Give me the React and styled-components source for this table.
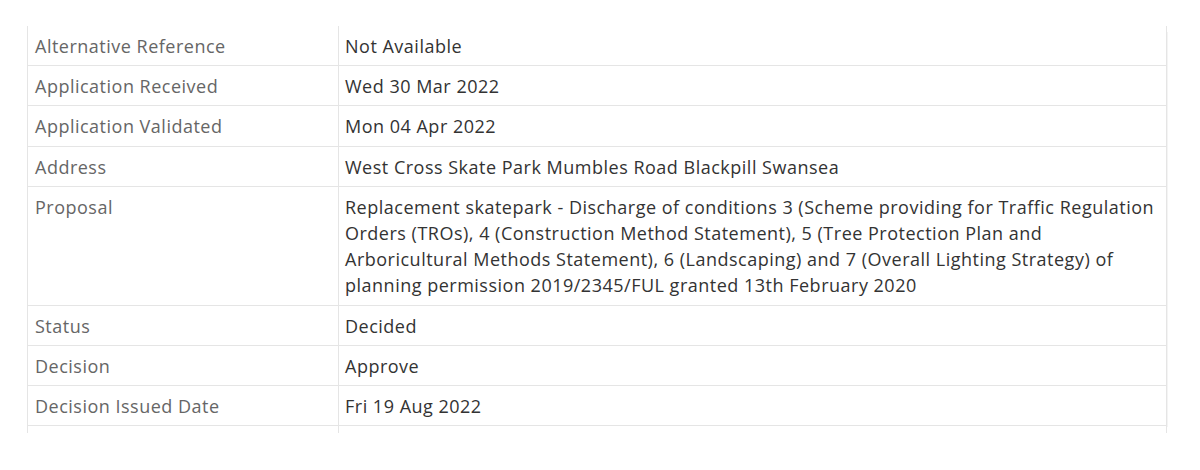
import React from 'react';
import styled, { createGlobalStyle } from 'styled-components';

const GlobalStyle = createGlobalStyle`
  body {
    margin: 0;
    background: #fff;
    font-family: "Open Sans", "DejaVu Sans", sans-serif;
  }
`;

const Page = styled.div`
  padding: 26px 0 0 27px;
  width: 1147px;
`;

const Table = styled.table`
  width: 1140px;
  border-collapse: collapse;
  table-layout: fixed;
  box-shadow: 7px 0 0 -6px #f4f4f4;
`;

const Row = styled.tr`
  border-bottom: 1px solid #e5e5e5;
`;

const Label = styled.th`
  box-sizing: border-box;
  width: 311px;
  text-align: left;
  vertical-align: top;
  font-weight: normal;
  font-size: 18px;
  letter-spacing: 0.5px;
  line-height: 26.2px;
  color: #666;
  padding: 7px 7px 6px 7px;
  border-left: 1px solid #e5e5e5;
  border-right: 1px solid #e5e5e5;
`;

const Value = styled.td`
  box-sizing: border-box;
  vertical-align: top;
  font-size: 18px;
  letter-spacing: 0.5px;
  line-height: 26.2px;
  color: #333;
  padding: 7px 7px 6px 6px;
  border-right: 1px solid #e5e5e5;
`;

const Tail = styled.td`
  height: 7px;
  padding: 0;
  border-left: 1px solid #e5e5e5;
  border-right: 1px solid #e5e5e5;
`;

const rows = [
  ['Alternative Reference', 'Not Available'],
  ['Application Received', 'Wed 30 Mar 2022'],
  ['Application Validated', 'Mon 04 Apr 2022'],
  ['Address', 'West Cross Skate Park Mumbles Road Blackpill Swansea'],
  [
    'Proposal',
    'Replacement skatepark - Discharge of conditions 3 (Scheme providing for Traffic Regulation Orders (TROs), 4 (Construction Method Statement), 5 (Tree Protection Plan and Arboricultural Methods Statement), 6 (Landscaping) and 7 (Overall Lighting Strategy) of planning permission 2019/2345/FUL granted 13th February 2020',
  ],
  ['Status', 'Decided'],
  ['Decision', 'Approve'],
  ['Decision Issued Date', 'Fri 19 Aug 2022'],
];

const App = () => (
  <Page>
    <GlobalStyle />
    <Table>
      <tbody>
        {rows.map(([label, value]) => (
          <Row key={label}>
            <Label>{label}</Label>
            <Value>{value}</Value>
          </Row>
        ))}
        <tr>
          <Tail />
          <Tail />
        </tr>
      </tbody>
    </Table>
  </Page>
);

export default App;
